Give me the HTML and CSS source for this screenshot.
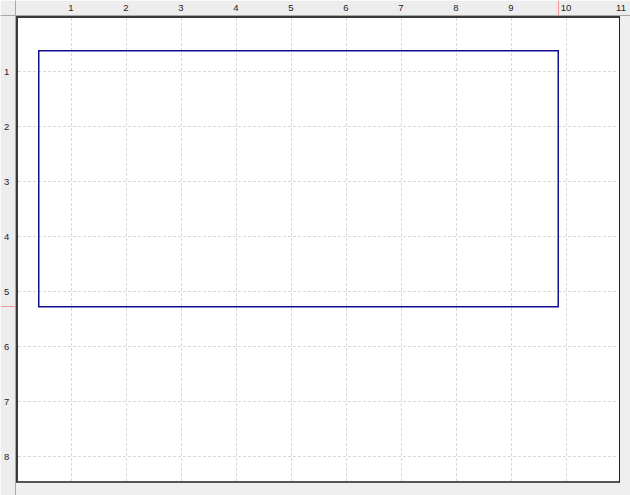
FILE: index.html
```html
<!DOCTYPE html>
<html lang="en">
<head>
  <meta charset="UTF-8" />
  <title>Canvas</title>
  <link rel="stylesheet" href="styles.css">
</head>
<body>
  <div class="editor">
    <div class="corner"></div>
    <div class="ruler ruler-top">
      <span>1</span><span>2</span><span>3</span><span>4</span><span>5</span><span>6</span>
      <span>7</span><span>8</span><span>9</span><span>10</span><span>11</span>
      <div class="marker marker-x"></div>
    </div>
    <div class="ruler ruler-left">
      <span>1</span><span>2</span><span>3</span><span>4</span>
      <span>5</span><span>6</span><span>7</span><span>8</span>
      <div class="marker marker-y"></div>
    </div>
    <div class="workspace">
      <div class="page">
        <svg class="sheet" width="600" height="464" xmlns="http://www.w3.org/2000/svg">
          <g class="grid">
            <!-- vertical guides, every 55px -->
            <line x1="53.5" y1="0" x2="53.5" y2="464" />
            <line x1="108.5" y1="0" x2="108.5" y2="464" />
            <line x1="163.5" y1="0" x2="163.5" y2="464" />
            <line x1="218.5" y1="0" x2="218.5" y2="464" />
            <line x1="273.5" y1="0" x2="273.5" y2="464" />
            <line x1="328.5" y1="0" x2="328.5" y2="464" />
            <line x1="383.5" y1="0" x2="383.5" y2="464" />
            <line x1="438.5" y1="0" x2="438.5" y2="464" />
            <line x1="493.5" y1="0" x2="493.5" y2="464" />
            <line x1="548.5" y1="0" x2="548.5" y2="464" />
            <!-- horizontal guides -->
            <line x1="0" y1="53.5" x2="600" y2="53.5" />
            <line x1="0" y1="108.5" x2="600" y2="108.5" />
            <line x1="0" y1="163.5" x2="600" y2="163.5" />
            <line x1="0" y1="218.5" x2="600" y2="218.5" />
            <line x1="0" y1="273.5" x2="600" y2="273.5" />
            <line x1="0" y1="328.5" x2="600" y2="328.5" />
            <line x1="0" y1="383.5" x2="600" y2="383.5" />
            <line x1="0" y1="438.5" x2="600" y2="438.5" />
          </g>
          <rect class="shape" x="20.75" y="32.75" width="519.5" height="256" />
        </svg>
      </div>
    </div>
  </div>
</body>
</html>
```

FILE: styles.css
```css
html, body {
  margin: 0;
  padding: 0;
  background-color: #efefef;
  font-family: "Liberation Sans", Arial, sans-serif;
  overflow: hidden;
}
.editor {
  display: grid;
  grid-template-columns: 16px 1fr;
  grid-template-rows: 16px 1fr;
  width: 630px;
  height: 495px;
}
.corner {
  box-sizing: border-box;
  border-top: 1px solid #fafafa;
  border-left: 1px solid #fafafa;
  border-right: 1px solid #a8a8a8;
  border-bottom: 1px solid #a8a8a8;
  background-color: #ededed;
}
.ruler {
  position: relative;
  box-sizing: border-box;
  background-color: #ededed;
  font-size: 9.5px;
  color: #22222e;
  display: flex;
}
.ruler-top {
  border-top: 1px solid #fafafa;
  border-bottom: 1px solid #a8a8a8;
  padding-left: 27.5px;
}
.ruler-top span {
  flex: 0 0 55px;
  text-align: center;
  line-height: 14px;
}
.ruler-left {
  flex-direction: column;
  border-left: 1px solid #fafafa;
  border-right: 1px solid #a8a8a8;
  padding-top: 27.5px;
}
.ruler-left span {
  flex: 0 0 55px;
  line-height: 55px;
  padding-left: 3px;
}
/* current pointer position on the rulers */
.marker {
  position: absolute;
  background-color: #f29a9a;
}
.marker-x {
  left: 542px;
  top: 0;
  width: 1px;
  height: 14px;
}
.marker-y {
  top: 290px;
  left: 0;
  width: 14px;
  height: 1px;
}
.workspace {
  background-color: #efefef;
}
.page {
  box-sizing: border-box;
  width: 604px;
  height: 467px;
  background-color: #fff;
  border-top: 2px solid #3a3a3a;
  border-left: 2px solid #3a3a3a;
  border-right: 1px solid #222;
  border-bottom: 2px solid #555;
  overflow: hidden;
}
.sheet {
  display: block;
}
.grid line {
  stroke: #d9d9d9;
  stroke-width: 1;
  stroke-dasharray: 3 2;
}
.shape {
  fill: none;
  stroke: #10108a;
  stroke-width: 1.5;
}
```
